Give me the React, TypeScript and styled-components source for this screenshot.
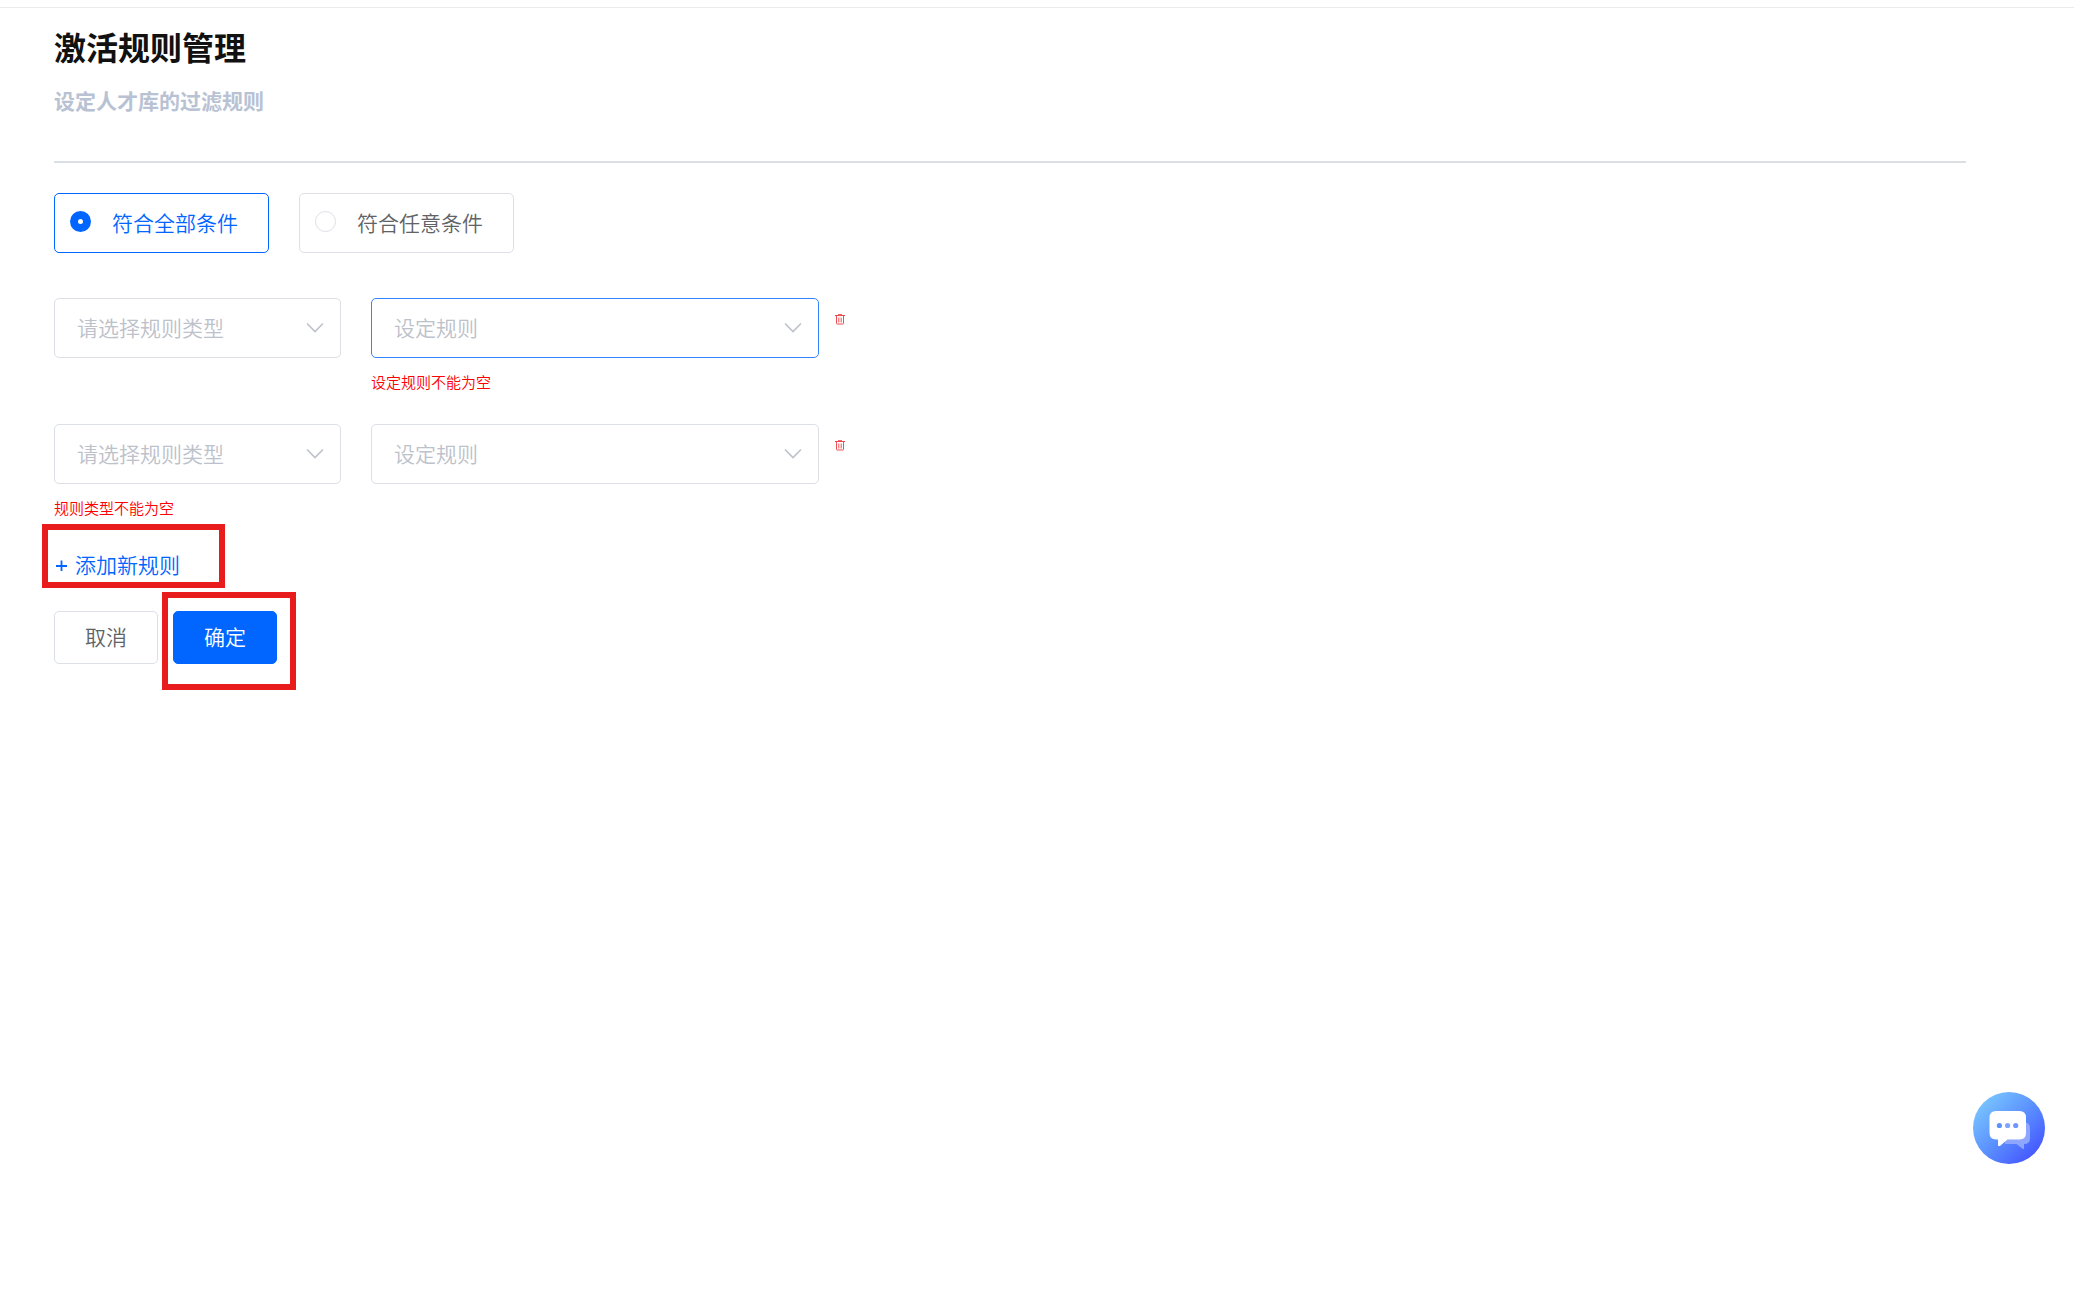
import React, { useState } from "react";
import styled, { createGlobalStyle, css } from "styled-components";

const GlobalStyle = createGlobalStyle`
  *, *::before, *::after { box-sizing: border-box; }
  body {
    margin: 0;
    background: #fff;
    color: #606266;
    font-family: "Noto Sans CJK SC", sans-serif;
    font-size: 21px;
    font-weight: 350;
  }
  button, input, select { font: inherit; margin: 0; }
`;

const TopBar = styled.header`
  height: 8px;
  border-bottom: 1px solid #ebebeb;
`;

const Main = styled.main`
  padding: 14px 108px 48px 54px;
`;

const Title = styled.h1`
  margin: 0;
  font-size: 32px;
  line-height: 48px;
  font-weight: 700;
  color: #111;
`;

const Subtitle = styled.h2`
  margin: 14px 0 0;
  font-size: 21px;
  line-height: 32px;
  font-weight: 700;
  color: #b8c2d3;
`;

const Divider = styled.hr`
  height: 2px;
  margin: 45px 0 30px;
  border: 0;
  background: #dadfe6;
`;

const RadioGroup = styled.div`
  display: flex;
  gap: 30px;
`;

const RadioCard = styled.label<{ $active: boolean }>`
  display: flex;
  align-items: center;
  gap: 21px;
  width: 215px;
  height: 60px;
  padding: 0 15px 3px;
  border: 1px solid ${(p) => (p.$active ? "#0066ff" : "#dcdfe6")};
  border-radius: 5px;
  color: ${(p) => (p.$active ? "#0066ff" : "#606266")};
  white-space: nowrap;
  cursor: pointer;
`;

const Radio = styled.input`
  appearance: none;
  flex: none;
  width: 21px;
  height: 21px;
  border: 1px solid #dcdfe6;
  border-radius: 50%;
  background: #fff;

  &:checked {
    border: 8px solid #0066ff;
  }
`;

const Rules = styled.div`
  display: flex;
  flex-direction: column;
  gap: 30px;
  margin-top: 45px;
`;

const RuleRow = styled.div`
  display: flex;
  align-items: flex-start;
`;

const Field = styled.div<{ $wide?: boolean }>`
  width: ${(p) => (p.$wide ? 448 : 287)}px;
  margin-right: ${(p) => (p.$wide ? 16 : 30)}px;
`;

const SelectShell = styled.div`
  display: grid;
  align-items: center;

  > * { grid-area: 1 / 1; }
  > svg {
    justify-self: end;
    margin-right: 17px;
    pointer-events: none;
  }
`;

const Select = styled.select<{ $focused?: boolean }>`
  appearance: none;
  width: 100%;
  height: 60px;
  padding: 0 48px 2px 22px;
  border: 1px solid ${(p) => (p.$focused ? "#3385ff" : "#dcdfe6")};
  border-radius: 5px;
  background: #fff;
  color: #bcc1ca;
  outline: none;
`;

const ErrorText = styled.p`
  margin: 12px 0 0;
  font-size: 15px;
  line-height: 24px;
  color: #ff0000;
`;

const IconButton = styled.button`
  display: flex;
  margin-top: 16px;
  padding: 0;
  border: 0;
  background: none;
  cursor: pointer;
`;

const Highlight = styled.div<{ $inset: string }>`
  position: relative;
  width: fit-content;

  &::after {
    content: "";
    position: absolute;
    inset: ${(p) => p.$inset};
    border: 6px solid #e81c1c;
    pointer-events: none;
  }
`;

const AddButton = styled.button`
  display: flex;
  align-items: center;
  gap: 7px;
  margin-top: 28px;
  padding: 0 0 0 1px;
  border: 0;
  background: none;
  color: #0066ff;
  line-height: 32px;
  cursor: pointer;
`;

const Actions = styled.div`
  display: flex;
  gap: 15px;
  margin-top: 31px;
`;

const Button = styled.button<{ $primary?: boolean }>`
  width: 104px;
  height: 53px;
  padding: 0 0 3px;
  border: 1px solid #dcdfe6;
  border-radius: 5px;
  background: #fff;
  color: #606266;
  cursor: pointer;
  ${(p) =>
    p.$primary &&
    css`
      border-color: #0066ff;
      background: #0066ff;
      color: #fff;
    `}
`;

const ChatButton = styled.button`
  position: fixed;
  right: 29px;
  bottom: 151px;
  display: flex;
  padding: 0;
  border: 0;
  border-radius: 50%;
  background: none;
  cursor: pointer;
`;

const Chevron = () => (
  <svg width="18" height="12" viewBox="0 0 18 12" fill="none" aria-hidden="true">
    <path d="M1.5 2 9 9.6 16.5 2" stroke="#c0c4cc" strokeWidth="1.7" strokeLinecap="round" strokeLinejoin="round" />
  </svg>
);

const Plus = () => (
  <svg width="13" height="13" viewBox="0 0 13 13" fill="none" aria-hidden="true">
    <path d="M1 8h11M6.5 2.500v11" stroke="#0066ff" strokeWidth="1.8" />
  </svg>
);

const Trash = () => (
  <svg width="10" height="11" viewBox="0 0 10 11" fill="none" aria-hidden="true">
    <path d="M3 .5h4" stroke="#f0696d" />
    <path d="M0 1.500h10" stroke="#e8484d" />
    <path d="M1.500 2v7.500q0 .5.5.5h6q.5 0 .5-.5V2" stroke="#ec5257" />
    <path d="M3.500 3.500v5M5 3.500v5M6.500 3.500v5" stroke="#f28a8d" />
  </svg>
);

const ChatIcon = () => (
  <svg width="72" height="72" viewBox="0 0 72 72" aria-hidden="true">
    <defs>
      <linearGradient id="chat-fill" x1="8" y1="10" x2="62" y2="64" gradientUnits="userSpaceOnUse">
        <stop offset="0" stopColor="#78c4ff" />
        <stop offset="0.5" stopColor="#5b91ff" />
        <stop offset="1" stopColor="#4557ff" />
      </linearGradient>
    </defs>
    <circle cx="36" cy="36" r="36" fill="url(#chat-fill)" />
    <path d="M50 30q7 0 7 6v10q0 6-6 6v4q0 1.500-1.500.8L43.500 52H32V30z" fill="#8ea6ff" />
    <path
      d="M23 19h23.500q6.500 0 6.500 6.500V41q0 6.500-6.500 6.500H34.500l-7.300 6.200q-2.200 1.300-2.200-1V47.500H23q-6.500 0-6.500-6.500V25.500Q16.500 19 23 19z"
      fill="#fff"
    />
    <circle cx="26.400" cy="33.500" r="2.600" fill="#5a93ff" />
    <circle cx="34.600" cy="33.500" r="2.600" fill="#80a5ff" />
    <circle cx="42.700" cy="33.500" r="2.600" fill="#7196ff" />
  </svg>
);

interface RuleSelectProps {
  label: string;
  wide?: boolean;
  focused?: boolean;
  error?: string;
}

const RuleSelect = ({ label, wide, focused, error }: RuleSelectProps) => (
  <Field $wide={wide}>
    <SelectShell>
      <Select $focused={focused} aria-label={label} defaultValue="">
        <option value="">{label}</option>
      </Select>
      <Chevron />
    </SelectShell>
    {error && <ErrorText role="alert">{error}</ErrorText>}
  </Field>
);

const matchModes = [
  { value: "all", label: "符合全部条件" },
  { value: "any", label: "符合任意条件" },
];

const initialRules = [
  { id: 1, ruleError: "设定规则不能为空", focused: true },
  { id: 2, typeError: "规则类型不能为空", focused: false },
];

export default function App() {
  const [mode, setMode] = useState("all");

  return (
    <>
      <GlobalStyle />
      <TopBar />
      <Main>
        <Title>激活规则管理</Title>
        <Subtitle>设定人才库的过滤规则</Subtitle>
        <Divider />
        <RadioGroup role="radiogroup">
          {matchModes.map((m) => (
            <RadioCard key={m.value} $active={mode === m.value}>
              <Radio
                type="radio"
                name="mode"
                value={m.value}
                checked={mode === m.value}
                onChange={() => setMode(m.value)}
              />
              {m.label}
            </RadioCard>
          ))}
        </RadioGroup>
        <Rules>
          {initialRules.map((rule) => (
            <RuleRow key={rule.id}>
              <RuleSelect label="请选择规则类型" error={rule.typeError} />
              <RuleSelect label="设定规则" wide focused={rule.focused} error={rule.ruleError} />
              <IconButton type="button" aria-label="删除">
                <Trash />
              </IconButton>
            </RuleRow>
          ))}
        </Rules>
        <Highlight $inset="-24px -45px -8px -12px">
          <AddButton type="button">
            <Plus />
            添加新规则
          </AddButton>
        </Highlight>
        <Actions>
          <Button type="button">取消</Button>
          <Highlight $inset="-19px -19px -26px -11px">
            <Button type="button" $primary>
              确定
            </Button>
          </Highlight>
        </Actions>
      </Main>
      <ChatButton type="button" aria-label="在线客服">
        <ChatIcon />
      </ChatButton>
    </>
  );
}
